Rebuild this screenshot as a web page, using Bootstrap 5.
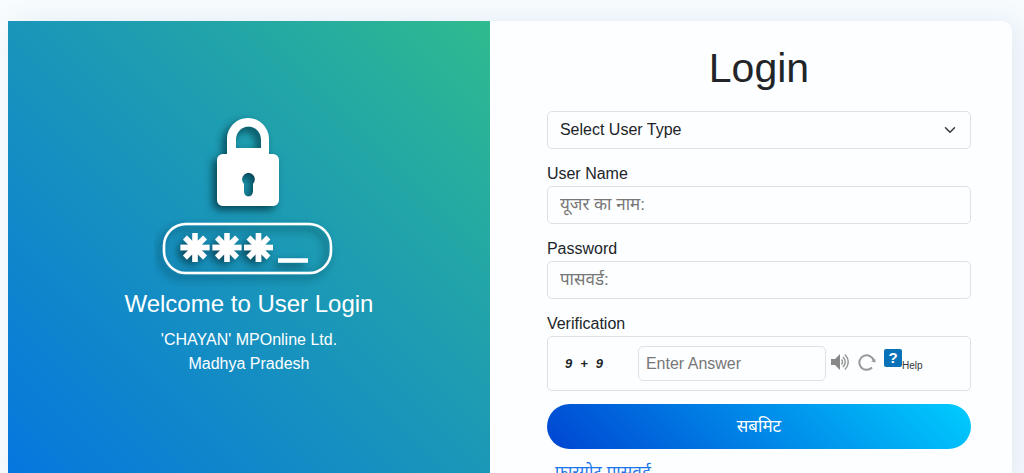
<!DOCTYPE html>
<html lang="hi">
<head>
<meta charset="utf-8">
<meta name="viewport" content="width=device-width, initial-scale=1">
<title>Login</title>
<link href="https://cdn.jsdelivr.net/npm/bootstrap@5.3.0/dist/css/bootstrap.min.css" rel="stylesheet">
<style>
body{font-family:"Liberation Sans","Noto Sans Devanagari","Noto Sans",sans-serif;background:#f8fcff}
.login-shell{padding:21px 12px 0 8px}
.login-card{border-radius:10px;background:#fdfeff;box-shadow:8px 0 30px rgba(40,90,140,.1)}
.welcome{width:48%;background:linear-gradient(45deg,#0575e0,#1e9eb0 62%,#2fbb8e);color:#fff;padding:88px 0 80px}
.welcome h2{font-size:24px;line-height:32px}
.welcome p{font-size:16px;line-height:24px}
.form-side{padding:24px 41px 8px 57px}
.form-side h1{font-size:41px;line-height:46px;margin-bottom:20px}
.form-control,.form-select,.captcha{font-size:16px;border-color:#dee2e6;background-color:#fdfeff;border-radius:5px}
.form-control::placeholder{color:#777}
.main-field{height:38px}
input.main-field{font-size:17px}
.form-label{line-height:24px;margin-bottom:0}
.field-group{margin-top:13px}
.captcha{border:1px solid #dee2e6;height:55px;padding:0 17px}
.sum{width:73px;font:italic bold 13px "Liberation Sans",sans-serif}
.answer{width:188px;height:35px;padding:4px 7px}
.icon-btn{border:0;background:none;padding:0;line-height:0}
.help-link{font-size:10px;color:#333;line-height:12px;height:25px}
.submit{height:45px;background:linear-gradient(45deg,#0045d1,#00ccff);color:#fff;font-size:17px;border:0;margin-top:13px}
.forgot{color:#1a76e8;font-size:17px;line-height:24px}
</style>
</head>
<body>
<main class="login-shell">
<div class="d-flex login-card">
<section class="welcome d-flex flex-column align-items-center text-center">
<svg width="190" height="179" viewBox="0 0 190 179" role="img" aria-label="Lock and password">
<defs><filter id="sh" x="-30%" y="-30%" width="160%" height="160%"><feDropShadow dx="-4" dy="4" stdDeviation="4" flood-color="#003040" flood-opacity=".8"/></filter></defs>
<g filter="url(#sh)">
<path fill="#fff" fill-rule="evenodd" d="M73 45V30a21 21 0 0 1 42 0v15h4a6 6 0 0 1 6 6v40a6 6 0 0 1-6 6H69a6 6 0 0 1-6-6V51a6 6 0 0 1 6-6zM82 39h25V30a12.500 12.500 0 0 0-25 0zM90 75a6.500 6.500 0 1 1 9 0v8a4.500 4.500 0 0 1-9 0z"/>
</g>
<g filter="url(#sh)"><rect x="10" y="115" width="167" height="49" rx="22" fill="none" stroke="#fff" stroke-width="2.500"/></g>
<g filter="url(#sh)" stroke="#fff" stroke-width="5.500">
<g id="star"><path d="M41 124v29M26.500 138.500h29M31 128.500l20 20M51 128.500l-20 20"/></g>
<use href="#star" x="32"/><use href="#star" x="63.500"/>
<path d="M124 151.500h30" stroke-width="4.500"/>
</g>
</svg>
<h2 class="fw-normal mt-0 mb-2">Welcome to User Login</h2>
<p class="mb-0">'CHAYAN' MPOnline Ltd.<br>Madhya Pradesh</p>
</section>
<section class="flex-fill form-side">
<h1 class="fw-normal text-center">Login</h1>
<form>
<select class="form-select main-field" aria-label="User type"><option>Select User Type</option></select>
<div class="field-group"><label class="form-label" for="user">User Name</label><input id="user" class="form-control main-field" placeholder="यूजर का नाम:"></div>
<div class="field-group"><label class="form-label" for="pass">Password</label><input id="pass" type="password" class="form-control main-field" placeholder="पासवर्ड:"></div>
<div class="field-group"><label class="form-label" for="answer">Verification</label>
<div class="captcha d-flex align-items-center">
<span class="sum d-flex gap-2"><span>9</span><span>+</span><span>9</span></span>
<input id="answer" class="form-control answer" placeholder="Enter Answer">
<button type="button" class="icon-btn ms-1 pb-1" aria-label="Listen"><svg width="20" height="18" viewBox="0 0 20 18"><path fill="#888" d="M1 6h4l5-5v16l-5-5H1z"/><path fill="none" stroke="#999" stroke-width="1.500" d="M11.500 6.500q2 2.500 0 5M13 4q4.500 5 0 10M15 1.500q6.500 7.500 0 15"/></svg></button>
<button type="button" class="icon-btn ms-2 pb-1" aria-label="Refresh"><svg width="18" height="18" viewBox="0 0 18 18"><path fill="none" stroke="#999" stroke-width="2" d="M14 14.500A7.300 7.300 0 1 1 15.800 8"/><path fill="#999" d="M13 8.500l4.500 1V6z"/></svg></button>
<a href="#" class="help-link d-flex align-items-start text-decoration-none ms-2 mb-1"><svg width="18" height="18" viewBox="0 0 18 18" aria-hidden="true"><rect width="18" height="18" rx="2" fill="#0872b9"/><text x="9" y="14" text-anchor="middle" font-size="15" font-weight="bold" fill="#fff">?</text></svg><span class="align-self-center pt-2">Help</span></a>
</div></div>
<button type="button" class="btn rounded-pill w-100 submit">सबमिट</button>
<div class="pt-2 mt-1 ps-2"><a href="#" class="forgot text-decoration-none">फारगोट पासवर्ड →</a></div>
</form>
</section>
</div>
</main>
<script src="https://cdn.jsdelivr.net/npm/bootstrap@5.3.0/dist/js/bootstrap.bundle.min.js"></script>
</body>
</html>
